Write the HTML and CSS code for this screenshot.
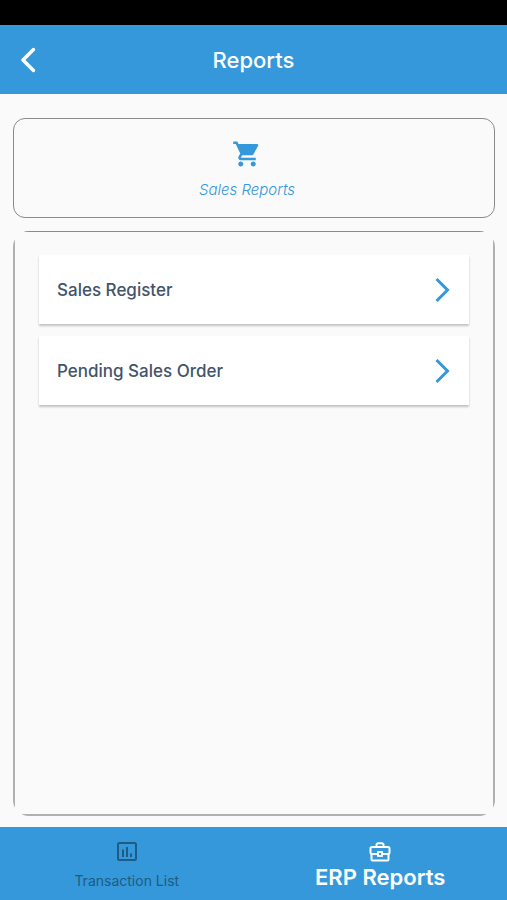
FILE: index.html
```html
<!DOCTYPE html>
<html lang="en">
<head>
<meta charset="utf-8">
<meta name="viewport" content="width=device-width, initial-scale=1">
<title>Reports</title>
<link rel="stylesheet" href="styles.css">
</head>
<body>
<div class="status-bar"></div>
<header class="app-bar">
  <button class="back" type="button" aria-label="Back">
    <svg width="16" height="26" viewBox="0 0 16 26" fill="none" stroke="currentColor" stroke-width="3.500" stroke-linecap="round" stroke-linejoin="round"><path d="M13.500 2.500 3 13l10.500 10.500"/></svg>
  </button>
  <h1 class="title">Reports</h1>
</header>
<main class="content">
  <button class="category" type="button">
    <svg width="30" height="30" viewBox="0 0 24 24" fill="currentColor"><path d="M7 18c-1.1 0-1.99.9-1.99 2S5.900 22 7 22s2-.9 2-2-.9-2-2-2zM1 2v2h2l3.600 7.590-1.350 2.450c-.16.280-.25.610-.25.960 0 1.100.9 2 2 2h12v-2H7.420c-.14 0-.25-.11-.25-.25l.03-.12.9-1.630h7.450c.75 0 1.410-.41 1.750-1.030l3.580-6.490A1 1 0 0 0 20 4H5.210l-.94-2H1zm16 16c-1.100 0-1.990.9-1.990 2s.89 2 1.990 2 2-.9 2-2-.9-2-2-2z"/></svg>
    <span class="category-label">Sales Reports</span>
  </button>
  <section class="panel">
    <nav class="reports" aria-label="Sales reports">
      <a class="report" href="#sales-register">Sales Register
        <svg width="16" height="26" viewBox="0 0 16 26" fill="none" stroke="currentColor" stroke-width="3"><path d="m1.500 2 11 11-11 11"/></svg>
      </a>
      <a class="report" href="#pending-sales-order">Pending Sales Order
        <svg width="16" height="26" viewBox="0 0 16 26" fill="none" stroke="currentColor" stroke-width="3"><path d="m1.500 2 11 11-11 11"/></svg>
      </a>
    </nav>
  </section>
</main>
<nav class="tabs" aria-label="Main">
  <a class="tab" href="#transactions">
    <svg width="20" height="20" viewBox="0 0 20 20" fill="none" stroke="currentColor" stroke-width="2"><rect x="1" y="1" width="18" height="17" rx="1.500"/><path d="M6 7.500V15M10 5v10M14 11.500V15"/></svg>
    <span>Transaction List</span>
  </a>
  <a class="tab active" href="#reports" aria-current="page">
    <svg width="22" height="20" viewBox="0 0 22 20" fill="none" stroke="currentColor" stroke-width="2"><path d="M7.500 5V3q0-1.800 1.800-1.800h3.400q1.800 0 1.800 1.800v2"/><rect x="1.500" y="5" width="19" height="7" rx="1.500"/><path d="M2.500 12v5.500q0 1 1 1h15q1 0 1-1V12"/><rect x="9" y="10" width="4" height="4" fill="#3498db" stroke-width="1.800"/></svg>
    <span>ERP Reports</span>
  </a>
</nav>
</body>
</html>
```
FILE: styles.css
```css
* {
  box-sizing: border-box;
}

body {
  display: flex;
  flex-direction: column;
  min-height: 100vh;
  margin: 0;
  background: #fafafa;
  color: #43546a;
  font-family: Inter, "Liberation Sans", sans-serif;
}

button {
  font: inherit;
  cursor: pointer;
}

a {
  color: inherit;
  text-decoration: none;
}

svg {
  display: block;
  flex: none;
}

.status-bar {
  height: 25px;
  background: #000;
}

.app-bar {
  display: grid;
  grid-template-columns: 56px 1fr 56px;
  align-items: center;
  height: 69px;
  background: #3498db;
  color: #fff;
}

.back {
  justify-self: start;
  margin-left: 12px;
  padding: 8px;
  border: 0;
  background: none;
  color: inherit;
}

.title {
  margin: 0;
  font-size: 22px;
  line-height: 28px;
  font-weight: 500;
  text-align: center;
}

.content {
  display: flex;
  flex: 1;
  flex-direction: column;
  gap: 13px;
  padding: 24px 12px 11px 13px;
}

.category {
  display: flex;
  flex-direction: column;
  align-items: center;
  gap: 11px;
  height: 100px;
  padding: 20px 14px 0 0;
  border: 1px solid #8a8a8a;
  border-radius: 12px;
  background: none;
  color: #3498db;
}

.category-label {
  font-size: 15px;
  line-height: 20px;
  font-style: italic;
  font-weight: 300;
}

/* The rounded clip trims the corners off the square frame inside it. */
.panel {
  display: flex;
  flex: 1;
  overflow: hidden;
  border-radius: 16px;
}

.reports {
  display: flex;
  flex: 1;
  flex-direction: column;
  gap: 12px;
  padding: 23px 24px;
  border: 2px solid #b0b0b0;
  border-top: 1px solid #8a8a8a;
}

.report {
  display: flex;
  align-items: center;
  justify-content: space-between;
  height: 69px;
  padding: 0 18px;
  background: #fff;
  box-shadow: 0 2px 2px rgba(0, 0, 0, 0.22);
  font-size: 17px;
  line-height: 24px;
  font-weight: 500;
}

.report svg {
  color: #3498db;
}

.tabs {
  display: flex;
  height: 73px;
  background: #3498db;
}

.tab {
  display: flex;
  flex: 1;
  flex-direction: column;
  align-items: center;
  gap: 9px;
  padding-top: 15px;
  color: #1f5b83;
  font-size: 14px;
  line-height: 20px;
}

.tab.active {
  gap: 2px;
  color: #fff;
  font-size: 22px;
  line-height: 26px;
  font-weight: 600;
}
```
